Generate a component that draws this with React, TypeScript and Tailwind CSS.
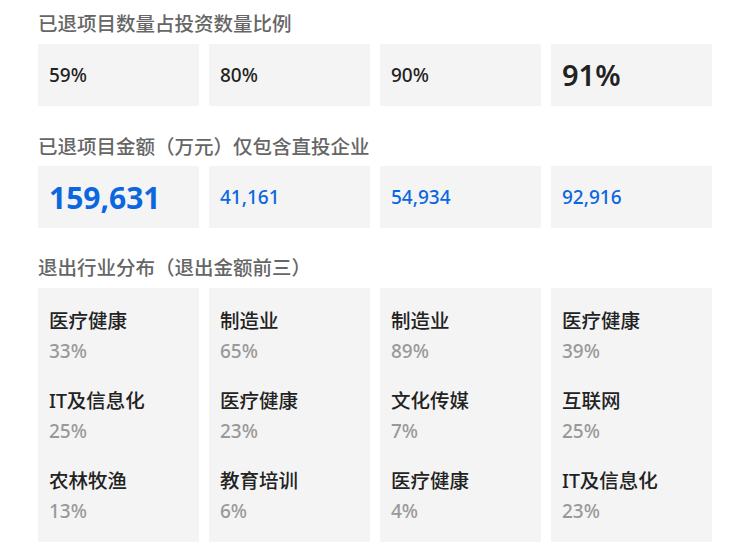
const font = { fontFamily: '"Noto Sans", "Noto Sans CJK SC", sans-serif' };

const ratios = ["59%", "80%", "90%"];
const amounts = ["41,161", "54,934", "92,916"];

const industries = [
  [
    ["医疗健康", "33%"],
    ["IT及信息化", "25%"],
    ["农林牧渔", "13%"],
  ],
  [
    ["制造业", "65%"],
    ["医疗健康", "23%"],
    ["教育培训", "6%"],
  ],
  [
    ["制造业", "89%"],
    ["文化传媒", "7%"],
    ["医疗健康", "4%"],
  ],
  [
    ["医疗健康", "39%"],
    ["互联网", "25%"],
    ["IT及信息化", "23%"],
  ],
];

const Title = ({ children, className }: { children: string; className: string }) => (
  <div className={`h-[28px] leading-[28px] text-[19.5px] font-medium text-[#666666] ${className}`}>{children}</div>
);

export default function App() {
  return (
    <div className="w-[750px] h-[554px] bg-white px-[38px] pt-[10px]" style={font}>
      <Title className="mb-[6px]">已退项目数量占投资数量比例</Title>
      <div className="grid grid-cols-4 gap-[10px]">
        {ratios.map((r) => (
          <div key={r} className="h-[62px] bg-[#f4f4f4] flex items-center px-[11px] text-[19px] font-medium text-[#222222]">
            {r}
          </div>
        ))}
        <div className="h-[62px] bg-[#f4f4f4] flex items-center px-[11px] text-[29px] font-semibold text-[#222222]">
          91%
        </div>
      </div>

      <Title className="mt-[27px] mb-[5px]">已退项目金额（万元）仅包含直投企业</Title>
      <div className="grid grid-cols-4 gap-[10px]">
        <div className="h-[62px] bg-[#f4f4f4] flex items-center px-[11px] text-[30px] font-bold text-[#0b67e0]">
          159,631
        </div>
        {amounts.map((a) => (
          <div key={a} className="h-[62px] bg-[#f4f4f4] flex items-center px-[11px] text-[19px] font-medium text-[#0b67e0]">
            {a}
          </div>
        ))}
      </div>

      <Title className="mt-[26px] mb-[6px]">退出行业分布（退出金额前三）</Title>
      <div className="grid grid-cols-4 gap-[10px]">
        {industries.map((col, i) => (
          <div key={i} className="h-[254px] bg-[#f4f4f4] px-[11px] pt-[18px] flex flex-col gap-[20px]">
            {col.map(([name, pct]) => (
              <div key={name + pct}>
                <div className="h-[30px] leading-[30px] text-[19.5px] font-medium text-[#222222]">{name}</div>
                <div className="h-[30px] leading-[30px] text-[19px] font-medium text-[#999999]">{pct}</div>
              </div>
            ))}
          </div>
        ))}
      </div>
    </div>
  );
}
